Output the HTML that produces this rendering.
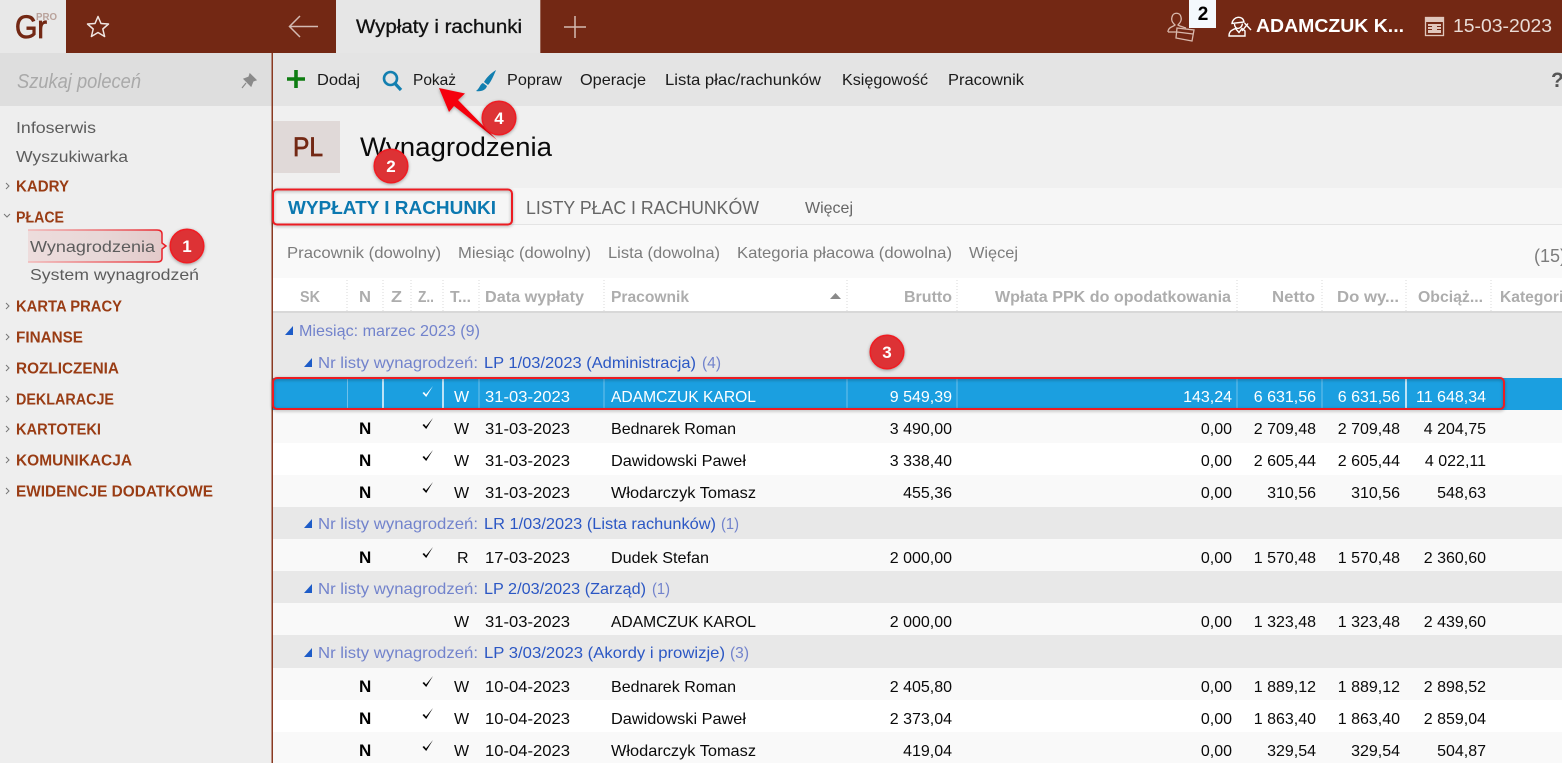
<!DOCTYPE html>
<html lang="pl"><head><meta charset="utf-8"><title>Wypłaty i rachunki</title>
<style>
html,body{margin:0;padding:0;width:1562px;height:763px;overflow:hidden;background:#f0f0f0}
svg{display:block}
text{font-family:"Liberation Sans",Arial,sans-serif;font-size:16px;fill:#0a0a0a}
.s{fill:#5c5c5c}
.k{font-weight:bold;fill:#993c14;font-size:16px}
.m{fill:#1a1a1a}
.f{fill:#7c7c7c}
.h{font-weight:bold;fill:#adadad;font-size:16px}
.g{fill:#7283cc}
.b{fill:#2b57c4}
.r{text-anchor:end}
.w{fill:#fff}
.n{font-weight:bold;fill:#000;font-size:17px}
.c{font-weight:bold;fill:#fff;font-size:17px;text-anchor:middle}
</style></head><body>
<svg width="1562" height="763" viewBox="0 0 1562 763" xmlns="http://www.w3.org/2000/svg">
<defs>
<filter id="sh" x="-30%" y="-30%" width="160%" height="160%"><feDropShadow dx="0" dy="1" stdDeviation="1.5" flood-color="#000" flood-opacity=".35"/></filter>
<linearGradient id="pk" x1="0" y1="0" x2="1" y2="0"><stop offset="0" stop-color="#eddcdc"/><stop offset=".5" stop-color="#e8d8d8"/><stop offset="1" stop-color="#e3c9c9"/></linearGradient>
<linearGradient id="pks" x1="0" y1="0" x2="1" y2="0"><stop offset="0" stop-color="#f2b8b8"/><stop offset=".75" stop-color="#ea5055"/><stop offset="1" stop-color="#ea1c24"/></linearGradient>
<g id="ck"><path d="M-5.500 1 L-4 0 L-2 2.500 L5 -6 L-1.800 5 Z"/></g>
</defs>
<!-- backgrounds -->
<rect width="1562" height="763" fill="#f0f0f0"/>
<rect x="0" y="106" width="272" height="657" fill="#eeeeee"/>
<rect x="0" y="53" width="272" height="53" fill="#dedede"/>
<rect x="273" y="53" width="1289" height="53" fill="#e4e4e4"/>
<rect x="273" y="188" width="1289" height="37" fill="#f6f6f6"/>
<rect x="273" y="224" width="1289" height="1" fill="#e4e4e4"/>
<rect x="273" y="225" width="1289" height="53" fill="#f9f9f9"/>
<rect x="273" y="278" width="1289" height="33" fill="#ffffff"/>
<rect x="273" y="311" width="1289" height="2" fill="#d8d8d8"/>
<rect x="273" y="313" width="1289" height="65" fill="#e8e8e8"/>
<rect x="273" y="410" width="1289" height="353" fill="#ffffff"/>
<rect x="273" y="410" width="1289" height="33" fill="#f9f9f9"/>
<rect x="273" y="475" width="1289" height="32" fill="#f9f9f9"/>
<rect x="273" y="507" width="1289" height="32" fill="#e8e8e8"/>
<rect x="273" y="539" width="1289" height="32" fill="#f9f9f9"/>
<rect x="273" y="571" width="1289" height="32" fill="#e8e8e8"/>
<rect x="273" y="603" width="1289" height="32" fill="#f9f9f9"/>
<rect x="273" y="635" width="1289" height="33" fill="#e8e8e8"/>
<rect x="273" y="668" width="1289" height="32" fill="#f9f9f9"/>
<rect x="273" y="732" width="1289" height="31" fill="#f9f9f9"/>
<rect x="271.500" y="53" width="1.500" height="710" fill="#8a3a22"/>
<!-- top bar -->
<rect width="1562" height="53" fill="#732814"/>
<rect width="66" height="53" fill="#e8e8e8"/>
<text x="15" y="38" style="font-size:32px;fill:#732814;stroke:#732814;stroke-width:.8" textLength="32" lengthAdjust="spacingAndGlyphs">Gr</text>
<text x="36" y="20" style="font-size:10.500px;fill:#b9a29b;font-weight:bold" textLength="21" lengthAdjust="spacingAndGlyphs">PRO</text>
<path d="M98 16.500 L101 23.500 L108.500 24 L102.800 29 L104.600 36.500 L98 32.500 L91.400 36.500 L93.200 29 L87.500 24 L95 23.500 Z" fill="none" stroke="#f0e6e2" stroke-width="1.500" stroke-linejoin="round"/>
<path d="M318 26.500 H290 M300 16 L289.500 26.500 L300 37" fill="none" stroke="#d4bab2" stroke-width="1.500"/>
<rect x="336" y="0" width="204" height="53" fill="#e6e6e6"/>
<rect x="540" y="0" width="1" height="53" fill="#9a6353"/>
<text x="356" y="33" style="font-size:19px;fill:#111;stroke:#111;stroke-width:.3" textLength="166" lengthAdjust="spacingAndGlyphs">Wypłaty i rachunki</text>
<path d="M575 16 V38 M564 27 H586" stroke="#d4bab2" stroke-width="1.500" fill="none"/>
<!-- notification icon -->
<g fill="none" stroke="#d9b8ac" stroke-width="1.300">
<path d="M1168 32 C1168 27 1173 27 1175 25 C1172 22 1171 20 1172 17 C1173 12 1180 12 1181 17 C1182 20 1180 23 1178 25 C1179 26 1183 27 1186 28"/>
<path d="M1168 32 H1177"/>
<path d="M1177 28 L1194 30 L1192 41 L1176 38 Z M1177 32 L1193 34"/>
</g>
<rect x="1189" y="0" width="27" height="28" fill="#f4f9fd"/>
<text x="1203" y="20" style="font-size:19px;font-weight:bold;fill:#000;text-anchor:middle">2</text>
<!-- user icon -->
<g fill="none" stroke="#fff" stroke-width="1.400">
<path d="M1232 23.500 C1233 16 1243 15 1244 22 L1232 23.500 Z"/>
<path d="M1234.500 24 C1234.500 30 1241.500 30 1242.500 23.500"/>
<path d="M1229 36 C1229 31 1232 30 1235.500 28.500 L1239 32.500 L1242 28.500 L1245 31 V36 Z"/>
<path d="M1242 31 L1248 23.500 M1244.500 23 L1251 30"/>
</g>
<text x="1256" y="32" style="font-size:18.500px;font-weight:bold;fill:#fff" textLength="148" lengthAdjust="spacingAndGlyphs">ADAMCZUK K...</text>
<!-- calendar -->
<rect x="1425.500" y="17.500" width="18" height="18" fill="none" stroke="#e0c6bc" stroke-width="1.300"/>
<rect x="1426" y="18" width="17" height="4" fill="#e0c6bc"/>
<g fill="#e0c6bc"><rect x="1428" y="24" width="13" height="2"/><rect x="1428" y="27" width="13" height="2"/><rect x="1428" y="30" width="13" height="3"/><rect x="1432" y="26" width="5" height="5"/></g>
<text x="1453" y="32" style="font-size:18.500px;fill:#eadcd6" textLength="99" lengthAdjust="spacingAndGlyphs">15-03-2023</text>
<!-- sidebar -->
<text x="17" y="88" style="font-size:20px;font-style:italic;fill:#a9a9a9" textLength="124" lengthAdjust="spacingAndGlyphs">Szukaj poleceń</text>
<path d="M250 74 L256 80 L253 81 L251 86 L244 79 L249 77 Z M246 83 L242 88" fill="#8a8a8a" stroke="#8a8a8a" stroke-width="1.200"/>
<text class="s" x="16" y="133" textLength="80" lengthAdjust="spacingAndGlyphs">Infoserwis</text>
<text class="s" x="16" y="162" textLength="112" lengthAdjust="spacingAndGlyphs">Wyszukiwarka</text>
<g fill="none" stroke="#777" stroke-width="1"><path d="M6 183 L9 186 L6 189"/><path d="M4 214 L7 217 L10 214"/><path d="M6 303 L9 306 L6 309"/><path d="M6 334 L9 337 L6 340"/><path d="M6 365 L9 368 L6 371"/><path d="M6 396 L9 399 L6 402"/><path d="M6 426 L9 429 L6 432"/><path d="M6 457 L9 460 L6 463"/><path d="M6 488 L9 491 L6 494"/></g>
<text class="k" x="16" y="191.500" textLength="53" lengthAdjust="spacingAndGlyphs">KADRY</text>
<text class="k" x="16" y="222.500" textLength="48" lengthAdjust="spacingAndGlyphs">PŁACE</text>
<path d="M28 230 H157 Q162 230 162 234 V243 L166 246 L162 249 V258 Q162 262 157 262 H28 Z" fill="url(#pk)"/>
<path d="M28 230 H157 Q162 230 162 234 V243 L166 246 L162 249 V258 Q162 262 157 262 H28" fill="none" stroke="url(#pks)" stroke-width="1.500"/>
<text class="s" x="30" y="252" textLength="125" lengthAdjust="spacingAndGlyphs">Wynagrodzenia</text>
<text class="s" x="30" y="280" textLength="169" lengthAdjust="spacingAndGlyphs">System wynagrodzeń</text>
<text class="k" x="16" y="311.500" textLength="106" lengthAdjust="spacingAndGlyphs">KARTA PRACY</text>
<text class="k" x="16" y="342.500" textLength="67" lengthAdjust="spacingAndGlyphs">FINANSE</text>
<text class="k" x="16" y="373.500" textLength="103" lengthAdjust="spacingAndGlyphs">ROZLICZENIA</text>
<text class="k" x="16" y="404.500" textLength="98" lengthAdjust="spacingAndGlyphs">DEKLARACJE</text>
<text class="k" x="16" y="434.500" textLength="85" lengthAdjust="spacingAndGlyphs">KARTOTEKI</text>
<text class="k" x="16" y="465.500" textLength="116" lengthAdjust="spacingAndGlyphs">KOMUNIKACJA</text>
<text class="k" x="16" y="496.500" textLength="197" lengthAdjust="spacingAndGlyphs">EWIDENCJE DODATKOWE</text>
<!-- toolbar -->
<path d="M296 70 V88 M287 79 H305" stroke="#0e7d12" stroke-width="3.600" fill="none"/>
<circle cx="390.500" cy="78.500" r="6.500" fill="none" stroke="#127fb0" stroke-width="2.600"/>
<path d="M395 83.500 L401 90" stroke="#127fb0" stroke-width="3.200"/>
<path d="M496 70 C491 73 486 78 484 82 L488 85 C491 82 494 75 496 70 Z M483 83 C480 84 480 88 476 91 C481 92 486 90 487 86 Z" fill="#127fb0"/>
<text class="m" x="317" y="85" textLength="43" lengthAdjust="spacingAndGlyphs">Dodaj</text>
<text class="m" x="413" y="85" textLength="43" lengthAdjust="spacingAndGlyphs">Pokaż</text>
<text class="m" x="507" y="85" textLength="55" lengthAdjust="spacingAndGlyphs">Popraw</text>
<text class="m" x="580" y="85" textLength="66" lengthAdjust="spacingAndGlyphs">Operacje</text>
<text class="m" x="665" y="85" textLength="156" lengthAdjust="spacingAndGlyphs">Lista płac/rachunków</text>
<text class="m" x="842" y="85" textLength="86" lengthAdjust="spacingAndGlyphs">Księgowość</text>
<text class="m" x="948" y="85" textLength="76" lengthAdjust="spacingAndGlyphs">Pracownik</text>
<text x="1551" y="87" style="font-size:21px;font-weight:bold;fill:#555">?</text>
<!-- title -->
<rect x="273" y="121" width="67" height="52" fill="#e0d9d8"/>
<text x="293" y="156" style="font-size:27px;fill:#732814;stroke:#732814;stroke-width:.7" textLength="30" lengthAdjust="spacingAndGlyphs">PL</text>
<text x="360" y="156" style="font-size:27px;fill:#0a0a0a" textLength="192" lengthAdjust="spacingAndGlyphs">Wynagrodzenia</text>
<!-- tabs -->
<text x="288" y="214" style="font-size:18px;font-weight:bold;fill:#0b78b0" textLength="208" lengthAdjust="spacingAndGlyphs">WYPŁATY I RACHUNKI</text>
<text x="526" y="214" style="font-size:18px;fill:#666" textLength="233" lengthAdjust="spacingAndGlyphs">LISTY PŁAC I RACHUNKÓW</text>
<text x="805" y="213" style="fill:#666" textLength="48" lengthAdjust="spacingAndGlyphs">Więcej</text>
<!-- filters -->
<text class="f" x="287" y="258" textLength="154" lengthAdjust="spacingAndGlyphs">Pracownik (dowolny)</text>
<text class="f" x="458" y="258" textLength="133" lengthAdjust="spacingAndGlyphs">Miesiąc (dowolny)</text>
<text class="f" x="608" y="258" textLength="112" lengthAdjust="spacingAndGlyphs">Lista (dowolna)</text>
<text class="f" x="737" y="258" textLength="215" lengthAdjust="spacingAndGlyphs">Kategoria płacowa (dowolna)</text>
<text class="f" x="969" y="258" textLength="49" lengthAdjust="spacingAndGlyphs">Więcej</text>
<text class="f" x="1534" y="262" style="font-size:18px">(15)</text>
<!-- header -->
<g stroke="#d8d8d8" stroke-dasharray="1 2" stroke-width="1"><path d="M347 280 V311 M383 280 V311 M411 280 V311 M443 280 V311 M479 280 V311 M604 280 V311 M847 280 V311 M957 280 V311 M1237 280 V311 M1322 280 V311 M1406 280 V311 M1491 280 V311"/></g>
<text class="h" x="300" y="302" textLength="20" lengthAdjust="spacingAndGlyphs">SK</text>
<text class="h" x="359" y="302" textLength="12" lengthAdjust="spacingAndGlyphs">N</text>
<text class="h" x="391" y="302" textLength="11" lengthAdjust="spacingAndGlyphs">Z</text>
<text class="h" x="418" y="302" textLength="16" lengthAdjust="spacingAndGlyphs">Z..</text>
<text class="h" x="450" y="302" textLength="21" lengthAdjust="spacingAndGlyphs">T...</text>
<text class="h" x="485" y="302" textLength="99" lengthAdjust="spacingAndGlyphs">Data wypłaty</text>
<text class="h" x="611" y="302" textLength="78" lengthAdjust="spacingAndGlyphs">Pracownik</text>
<path d="M830 299 L835.500 293 L841 299 Z" fill="#8a8a8a"/>
<text class="h" x="904" y="302" textLength="48" lengthAdjust="spacingAndGlyphs">Brutto</text>
<text class="h" x="995" y="302" textLength="236" lengthAdjust="spacingAndGlyphs">Wpłata PPK do opodatkowania</text>
<text class="h" x="1272" y="302" textLength="43" lengthAdjust="spacingAndGlyphs">Netto</text>
<text class="h" x="1337" y="302" textLength="62" lengthAdjust="spacingAndGlyphs">Do wy...</text>
<text class="h" x="1418" y="302" textLength="65" lengthAdjust="spacingAndGlyphs">Obciąż...</text>
<text class="h" x="1500" y="302" textLength="72" lengthAdjust="spacingAndGlyphs">Kategoria</text>
<!-- groups -->
<path d="M285 335 L293 335 L293 326 Z M304 367 L312 367 L312 358 Z M304 528 L312 528 L312 519 Z M304 593 L312 593 L312 584 Z M304 657 L312 657 L312 648 Z" fill="#1d5cc8"/>
<text class="g" x="299" y="336" textLength="181" lengthAdjust="spacingAndGlyphs">Miesiąc: marzec 2023 (9)</text>
<text class="g" x="318" y="368" textLength="160" lengthAdjust="spacingAndGlyphs">Nr listy wynagrodzeń:</text>
<text class="b" x="484" y="368" textLength="212" lengthAdjust="spacingAndGlyphs">LP 1/03/2023 (Administracja)</text>
<text class="g" x="702" y="368" textLength="19" lengthAdjust="spacingAndGlyphs">(4)</text>
<text class="g" x="318" y="529" textLength="160" lengthAdjust="spacingAndGlyphs">Nr listy wynagrodzeń:</text>
<text class="b" x="484" y="529" textLength="232" lengthAdjust="spacingAndGlyphs">LR 1/03/2023 (Lista rachunków)</text>
<text class="g" x="721" y="529" textLength="18" lengthAdjust="spacingAndGlyphs">(1)</text>
<text class="g" x="318" y="594" textLength="160" lengthAdjust="spacingAndGlyphs">Nr listy wynagrodzeń:</text>
<text class="b" x="484" y="594" textLength="162" lengthAdjust="spacingAndGlyphs">LP 2/03/2023 (Zarząd)</text>
<text class="g" x="652" y="594" textLength="18" lengthAdjust="spacingAndGlyphs">(1)</text>
<text class="g" x="318" y="658" textLength="160" lengthAdjust="spacingAndGlyphs">Nr listy wynagrodzeń:</text>
<text class="b" x="484" y="658" textLength="241" lengthAdjust="spacingAndGlyphs">LP 3/03/2023 (Akordy i prowizje)</text>
<text class="g" x="730" y="658" textLength="19" lengthAdjust="spacingAndGlyphs">(3)</text>
<!-- selected row -->
<rect x="273" y="378" width="1289" height="32" fill="#1b9fe0"/>
<g stroke="#6fc0ea" stroke-width="1"><path d="M347.500 378 V410 M479 378 V410 M604 378 V410 M847 378 V410 M957 378 V410 M1237 378 V410 M1322 378 V410"/></g>
<g stroke="#e6f4fc" stroke-width="1.600"><path d="M383 378 V410 M443 378 V410 M1406 378 V410"/></g>
<use href="#ck" x="428" y="392" fill="#fff"/>
<text class="w" x="454" y="402">W</text>
<text class="w" x="485" y="402" textLength="85" lengthAdjust="spacingAndGlyphs">31-03-2023</text>
<text class="w" x="611" y="402" textLength="145" lengthAdjust="spacingAndGlyphs">ADAMCZUK KAROL</text>
<text class="w r" x="952" y="402">9 549,39</text>
<text class="w r" x="1232" y="402">143,24</text>
<text class="w r" x="1316" y="402">6 631,56</text>
<text class="w r" x="1400" y="402">6 631,56</text>
<text class="w r" x="1486" y="402">11 648,34</text>
<!-- rows -->
<g fill="#000">
<use href="#ck" x="428" y="424"/><use href="#ck" x="428" y="456"/><use href="#ck" x="428" y="488"/><use href="#ck" x="428" y="553"/><use href="#ck" x="428" y="682"/><use href="#ck" x="428" y="714"/><use href="#ck" x="428" y="746"/>
</g>
<text class="n" x="359" y="434">N</text><text x="454" y="434">W</text><text x="485" y="434" textLength="85" lengthAdjust="spacingAndGlyphs">31-03-2023</text><text x="611" y="434" textLength="125" lengthAdjust="spacingAndGlyphs">Bednarek Roman</text><text class="r" x="952" y="434">3 490,00</text><text class="r" x="1232" y="434">0,00</text><text class="r" x="1316" y="434">2 709,48</text><text class="r" x="1400" y="434">2 709,48</text><text class="r" x="1486" y="434">4 204,75</text>
<text class="n" x="359" y="466">N</text><text x="454" y="466">W</text><text x="485" y="466" textLength="85" lengthAdjust="spacingAndGlyphs">31-03-2023</text><text x="611" y="466" textLength="135" lengthAdjust="spacingAndGlyphs">Dawidowski Paweł</text><text class="r" x="952" y="466">3 338,40</text><text class="r" x="1232" y="466">0,00</text><text class="r" x="1316" y="466">2 605,44</text><text class="r" x="1400" y="466">2 605,44</text><text class="r" x="1486" y="466">4 022,11</text>
<text class="n" x="359" y="498">N</text><text x="454" y="498">W</text><text x="485" y="498" textLength="85" lengthAdjust="spacingAndGlyphs">31-03-2023</text><text x="611" y="498" textLength="145" lengthAdjust="spacingAndGlyphs">Włodarczyk Tomasz</text><text class="r" x="952" y="498">455,36</text><text class="r" x="1232" y="498">0,00</text><text class="r" x="1316" y="498">310,56</text><text class="r" x="1400" y="498">310,56</text><text class="r" x="1486" y="498">548,63</text>
<text class="n" x="359" y="563">N</text><text x="457" y="563">R</text><text x="485" y="563" textLength="85" lengthAdjust="spacingAndGlyphs">17-03-2023</text><text x="611" y="563" textLength="98" lengthAdjust="spacingAndGlyphs">Dudek Stefan</text><text class="r" x="952" y="563">2 000,00</text><text class="r" x="1232" y="563">0,00</text><text class="r" x="1316" y="563">1 570,48</text><text class="r" x="1400" y="563">1 570,48</text><text class="r" x="1486" y="563">2 360,60</text>
<text x="454" y="627">W</text><text x="485" y="627" textLength="85" lengthAdjust="spacingAndGlyphs">31-03-2023</text><text x="611" y="627" textLength="145" lengthAdjust="spacingAndGlyphs">ADAMCZUK KAROL</text><text class="r" x="952" y="627">2 000,00</text><text class="r" x="1232" y="627">0,00</text><text class="r" x="1316" y="627">1 323,48</text><text class="r" x="1400" y="627">1 323,48</text><text class="r" x="1486" y="627">2 439,60</text>
<text class="n" x="359" y="692">N</text><text x="454" y="692">W</text><text x="485" y="692" textLength="85" lengthAdjust="spacingAndGlyphs">10-04-2023</text><text x="611" y="692" textLength="125" lengthAdjust="spacingAndGlyphs">Bednarek Roman</text><text class="r" x="952" y="692">2 405,80</text><text class="r" x="1232" y="692">0,00</text><text class="r" x="1316" y="692">1 889,12</text><text class="r" x="1400" y="692">1 889,12</text><text class="r" x="1486" y="692">2 898,52</text>
<text class="n" x="359" y="724">N</text><text x="454" y="724">W</text><text x="485" y="724" textLength="85" lengthAdjust="spacingAndGlyphs">10-04-2023</text><text x="611" y="724" textLength="135" lengthAdjust="spacingAndGlyphs">Dawidowski Paweł</text><text class="r" x="952" y="724">2 373,04</text><text class="r" x="1232" y="724">0,00</text><text class="r" x="1316" y="724">1 863,40</text><text class="r" x="1400" y="724">1 863,40</text><text class="r" x="1486" y="724">2 859,04</text>
<text class="n" x="359" y="756">N</text><text x="454" y="756">W</text><text x="485" y="756" textLength="85" lengthAdjust="spacingAndGlyphs">10-04-2023</text><text x="611" y="756" textLength="145" lengthAdjust="spacingAndGlyphs">Włodarczyk Tomasz</text><text class="r" x="952" y="756">419,04</text><text class="r" x="1232" y="756">0,00</text><text class="r" x="1316" y="756">329,54</text><text class="r" x="1400" y="756">329,54</text><text class="r" x="1486" y="756">504,87</text>
<!-- annotations -->
<g fill="none" stroke="#ec1c24" stroke-width="2" filter="url(#sh)">
<rect x="273" y="189.500" width="239" height="35" rx="4"/>
<rect x="273" y="378" width="1231" height="31" rx="4"/>
</g>
<path d="M439 88 L465 93.500 L458 100 L497 140 L454 106 L449 112 Z" fill="#f5000a" filter="url(#sh)"/>
<g fill="#dd3036" stroke="#f01c22" stroke-width="1.500" filter="url(#sh)">
<circle cx="187" cy="246" r="16.800"/>
<circle cx="391" cy="166" r="16.800"/>
<circle cx="887" cy="352" r="16.800"/>
<circle cx="499" cy="118" r="16.800"/>
</g>
<text class="c" x="187" y="252">1</text>
<text class="c" x="391" y="172">2</text>
<text class="c" x="887" y="358">3</text>
<text class="c" x="499" y="124">4</text>
</svg>
</body></html>
